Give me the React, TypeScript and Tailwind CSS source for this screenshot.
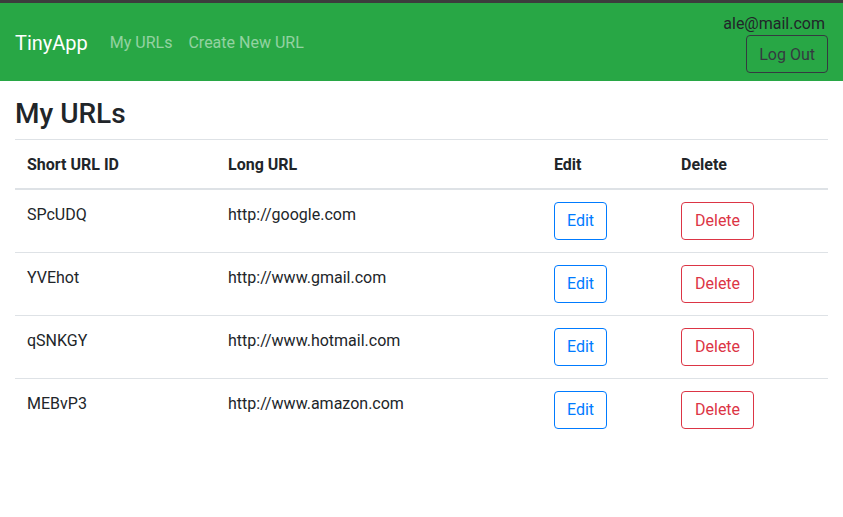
import React from "react";

const urls = [
  { id: "SPcUDQ", long: "http://google.com" },
  { id: "YVEhot", long: "http://www.gmail.com" },
  { id: "qSNKGY", long: "http://www.hotmail.com" },
  { id: "MEBvP3", long: "http://www.amazon.com" },
];

export default function App() {
  return (
    <div className="min-h-[517px] bg-white text-[#212529] font-['Roboto',sans-serif] text-[16px] leading-[1.5]">
      <div className="h-[3px] bg-[#3c3c3c]" />
      <nav className="flex items-center justify-between bg-[#28a745] pl-[15px] pr-[15px] py-[8px]">
        <div className="flex items-center pt-[2px]">
          <a className="text-[20px] text-white mr-[22px] leading-[1.5]">TinyApp</a>
          <a className="text-white/50 pr-[16px]">My URLs</a>
          <a className="text-white/50">Create New URL</a>
        </div>
        <div className="flex flex-col items-end">
          <span className="pr-[3px] pt-[1px] -mb-[1px]">ale@mail.com</span>
          <button className="h-[38px] px-[12px] pt-[1px] border border-[#343a40] rounded-[4px] text-[#343a40]">
            Log Out
          </button>
        </div>
      </nav>

      <main className="px-[15px]">
        <h3 className="text-[28px] leading-[1.2] mt-[16px] mb-[8px] font-medium">My URLs</h3>
        <table className="w-full border-collapse text-left">
          <thead>
            <tr>
              <th className="w-[201px] px-[12px] pt-[13px] pb-[11px] border-t border-b-2 border-[#dee2e6] font-bold">Short URL ID</th>
              <th className="w-[326px] px-[12px] pt-[13px] pb-[11px] border-t border-b-2 border-[#dee2e6] font-bold">Long URL</th>
              <th className="w-[127px] px-[12px] pt-[13px] pb-[11px] border-t border-b-2 border-[#dee2e6] font-bold">Edit</th>
              <th className="px-[12px] pt-[13px] pb-[11px] border-t border-b-2 border-[#dee2e6] font-bold">Delete</th>
            </tr>
          </thead>
          <tbody>
            {urls.map((u) => (
              <tr key={u.id}>
                <td className="px-[12px] pt-[13px] pb-[11px] border-t border-[#dee2e6] align-top">{u.id}</td>
                <td className="px-[12px] pt-[13px] pb-[11px] border-t border-[#dee2e6] align-top">{u.long}</td>
                <td className="p-[12px] border-t border-[#dee2e6] align-top">
                  <button className="h-[38px] px-[12px] pt-[1px] border border-[#007bff] rounded-[4px] text-[#007bff]">
                    Edit
                  </button>
                </td>
                <td className="p-[12px] border-t border-[#dee2e6] align-top">
                  <button className="h-[38px] px-[13px] pt-[1px] border border-[#dc3545] rounded-[4px] text-[#dc3545]">
                    Delete
                  </button>
                </td>
              </tr>
            ))}
          </tbody>
        </table>
      </main>
    </div>
  );
}
